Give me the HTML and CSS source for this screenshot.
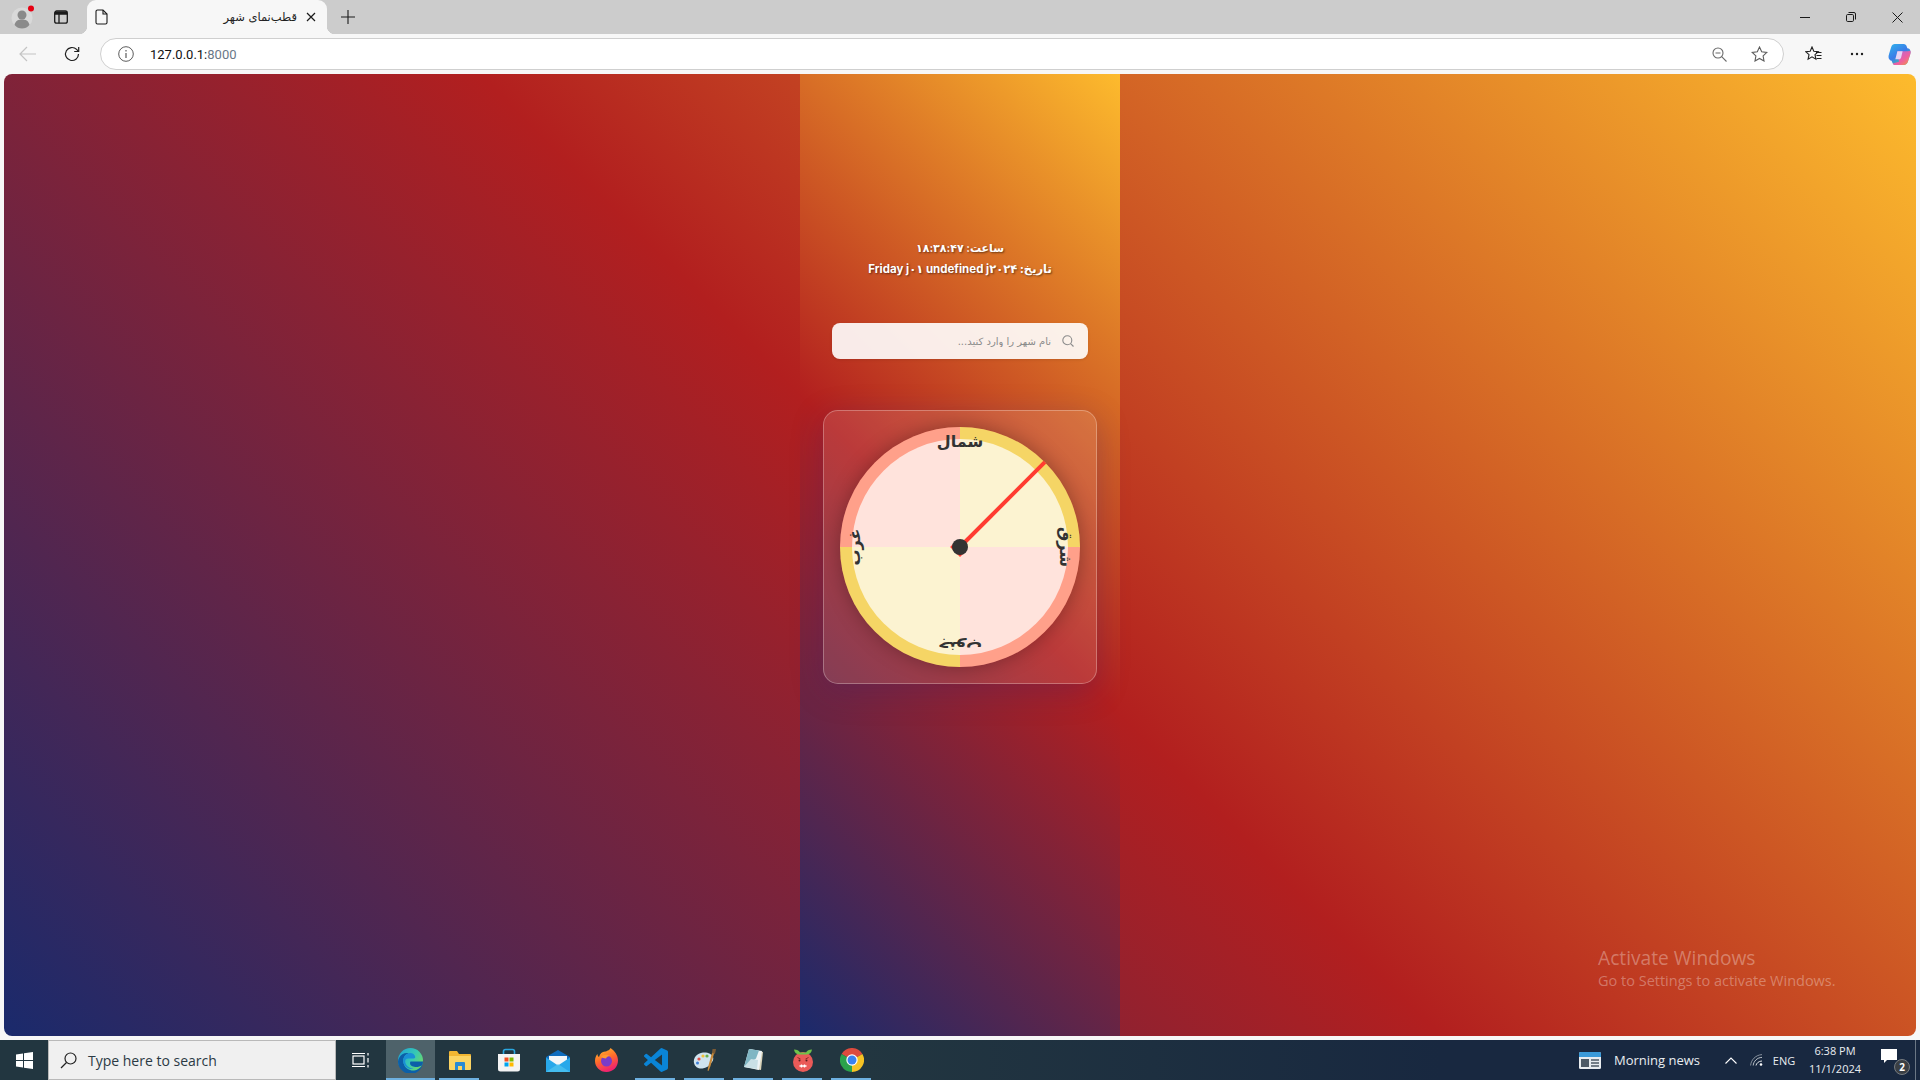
FILE: index.html
```html
<!DOCTYPE html>
<html lang="fa">
<head>
<meta charset="utf-8">
<title>قطب‌نمای شهر</title>
<link rel="stylesheet" href="styles.css">
</head>
<body>
<header class="tabstrip">
  <div class="strip-btn profile">
    <svg width="24" height="24" viewBox="0 0 24 24"><circle cx="11" cy="13" r="10.5" fill="#d9d9d9"/><circle cx="11" cy="10" r="4.5" fill="#8a8a8a"/><path d="M3.5 20c1-4.5 4-5.5 7.500-5.500s6.500 1 7.500 5.500c-2 2.500-4.500 3.500-7.500 3.500s-5.500-1-7.500-3.500z" fill="#8a8a8a"/><circle cx="20" cy="3.500" r="3" fill="#e60012"/></svg>
  </div>
  <div class="strip-btn vtabs">
    <svg width="16" height="16" viewBox="0 0 16 16" fill="none" stroke="#1a1a1a" stroke-width="1.300"><rect x="1.700" y="2" width="12.600" height="12.200" rx="2"/><path d="M1.700 5h12.600M6 5v9.200"/><path d="M2 2.500h12v2.500H2z" fill="#1a1a1a" stroke="none"/></svg>
  </div>
  <div class="tab">
    <svg class="tab-doc" width="14" height="16" viewBox="0 0 14 16" fill="none" stroke="#1a1a1a" stroke-width="1.100"><path d="M2.500 1h5.500l4 4v8.500a1.500 1.500 0 0 1-1.500 1.500h-8A1.500 1.500 0 0 1 1 13.500v-11A1.500 1.500 0 0 1 2.500 1z"/><path d="M8 1v4h4"/></svg>
    <span class="tab-title">قطب‌نمای شهر</span>
    <svg class="tab-close" width="10" height="10" viewBox="0 0 10 10" stroke="#1a1a1a" stroke-width="1.200"><path d="M1 1l8 8M9 1l-8 8"/></svg>
  </div>
  <div class="newtab">
    <svg width="14" height="14" viewBox="0 0 14 14" stroke="#1a1a1a" stroke-width="1.100"><path d="M7 0v14M0 7h14"/></svg>
  </div>
  <div class="win-controls">
    <div class="win-btn"><svg width="10" height="10" viewBox="0 0 10 10" stroke="#1a1a1a"><path d="M0 5.500h10"/></svg></div>
    <div class="win-btn"><svg width="10" height="10" viewBox="0 0 10 10" fill="none" stroke="#1a1a1a"><rect x=".5" y="2.500" width="7" height="7" rx="1.200"/><path d="M2.500 .5h5.500a1.500 1.500 0 0 1 1.500 1.500v5.500"/></svg></div>
    <div class="win-btn"><svg width="11" height="11" viewBox="0 0 11 11" stroke="#1a1a1a"><path d="M.5.5l10 10M10.500.5l-10 10"/></svg></div>
  </div>
</header>

<nav class="toolbar">
  <div class="tool back"><svg width="18" height="16" viewBox="0 0 18 16" fill="none" stroke="#c4c4c4" stroke-width="1.200"><path d="M17 8H1M8 1L1 8l7 7"/></svg></div>
  <div class="tool reload"><svg width="16" height="16" viewBox="0 0 16 16" fill="none" stroke="#1f1f1f" stroke-width="1.200"><path d="M14.500 8a6.500 6.500 0 1 1-1.900-4.600L14.500 5.300"/><path d="M14.700 1v4.500h-4.500"/></svg></div>
  <div class="omnibox">
    <svg class="info" width="16" height="16" viewBox="0 0 16 16" fill="none" stroke="#5c5c5c"><circle cx="8" cy="8" r="7.300"/><path d="M8 7v5M8 4v1.400" stroke-width="1.200"/></svg>
    <span class="url">127.0.0.1:<span class="port">8000</span></span>
    <svg class="omni-zoom" width="15" height="15" viewBox="0 0 15 15" fill="none" stroke="#6b6b6b" stroke-width="1.100"><circle cx="6" cy="6" r="5"/><path d="M9.700 9.700L14.500 14.500M3.500 6h5"/></svg>
    <svg class="omni-star" width="17" height="16" viewBox="0 0 17 16" fill="none" stroke="#5c5c5c" stroke-width="1.100"><path d="M8.500 1l2.200 4.700 5.100.7-3.700 3.500.9 5.100-4.500-2.500L4 15l.9-5.100L1.200 6.400l5.100-.7z"/></svg>
  </div>
  <div class="tool favs"><svg width="17" height="16" viewBox="0 0 17 16" fill="none" stroke="#1f1f1f" stroke-width="1.100"><path d="M7 1l1.800 4.200 4.500.5-3.300 3 .9 4.500L7 10.900 3.100 13.200l.9-4.500-3.300-3 4.500-.5z"/><path d="M11 6.500h5.500M11.500 9.500h5M11.500 12.500h5"/></svg></div>
  <div class="tool more"><svg width="14" height="4" viewBox="0 0 14 4" fill="#1f1f1f"><circle cx="2" cy="2" r="1.200"/><circle cx="7" cy="2" r="1.200"/><circle cx="12" cy="2" r="1.200"/></svg></div>
  <div class="tool copilot">
    <svg width="23" height="23" viewBox="0 0 22 22"><defs><linearGradient id="cpa" x1="0" y1="0" x2=".7" y2="1"><stop offset="0" stop-color="#2fb4ec"/><stop offset=".55" stop-color="#3a7be8"/><stop offset="1" stop-color="#4fd39a"/></linearGradient><linearGradient id="cpb" x1="0" y1="0" x2="1" y2="1"><stop offset="0" stop-color="#a86be0"/><stop offset=".6" stop-color="#ee5fa0"/><stop offset="1" stop-color="#f79a3e"/></linearGradient></defs><path d="M6.500 1H15c1.500 0 2.500 1 3 2.500l.5 1.500c1.500 0 3 1 3 3.500 0 1-.2 2-.5 3L19 18c-.6 2-2 3-4 3H7c-1.500 0-2.500-1-3-2.500L3.500 17C2 17 .5 15.500.5 13.500c0-1 .2-2 .5-3L3 4C3.600 2 5 1 6.500 1z" fill="url(#cpa)"/><path d="M9 8h10l2.500-.5c.3 1 .2 2-.1 3L19 18c-.6 2-2 3-4 3H7c-1 0-2-.5-2.500-1.500l6-1.500z" fill="url(#cpb)"/><path d="M9 8h5l-1.500 6c-.2.8-1 1.500-2 1.500H7z" fill="#e6d4f5"/></svg>
  </div>
</nav>

<main class="viewport">
  <div class="page">
    <section class="app">
      <div class="datetime">
        <p class="dt-line dt-time">ساعت: ۱۸:۳۸:۴۷</p>
        <p class="dt-line">تاریخ: Friday j۰۱ undefined j۲۰۲۴</p>
      </div>
      <div class="search">
        <svg class="search-icon" width="12" height="12" viewBox="0 0 12 12" fill="none" stroke="#8b8b8b" stroke-width="1.100"><circle cx="5.300" cy="5.300" r="4.500"/><path d="M8.600 8.600l2.900 2.900"/></svg>
        <input class="search-input" type="text" dir="rtl" placeholder="نام شهر را وارد کنید...">
      </div>
      <div class="compass-card">
        <div class="dial">
          <div class="dial-face"></div>
          <span class="dir dir-n">شمال</span>
          <span class="dir dir-e">شرق</span>
          <span class="dir dir-s">جنوب</span>
          <span class="dir dir-w">غرب</span>
          <div class="needle"><div class="needle-hub"></div><div class="needle-bar"></div></div>
          <div class="pivot"></div>
        </div>
      </div>
    </section>
    <div class="activate">
      <div class="activate-title">Activate Windows</div>
      <div class="activate-sub">Go to Settings to activate Windows.</div>
    </div>
  </div>
</main>

<footer class="taskbar">
  <div class="start"><svg width="17" height="17" viewBox="0 0 17 17" fill="#fff"><path d="M0 2.500l7-1v6.500H0zM8 1.300L17 0v8H8zM0 9h7v6.500l-7-1zM8 9h9v8l-9-1.300z"/></svg></div>
  <div class="tb-search">
    <svg width="17" height="17" viewBox="0 0 17 17" fill="none" stroke="#222" stroke-width="1.200"><circle cx="10.500" cy="6.500" r="5.500"/><path d="M6.500 10.500L1 16"/></svg>
    <span>Type here to search</span>
  </div>
  <div class="taskview"><svg width="18" height="16" viewBox="0 0 18 16" fill="none" stroke="#fff" stroke-width="1.200"><rect x="1" y="4" width="11" height="8"/><path d="M0 1.500h13M0 14.500h13M16 1v2.500M16 6v4.500M16 13v2.500"/></svg></div>
  <div class="app-icon active">
    <svg width="25" height="25" viewBox="0 0 24 24"><defs><linearGradient id="ega" x1="0" y1="0" x2="1" y2=".6"><stop offset="0" stop-color="#1fa2d8"/><stop offset=".6" stop-color="#36c8b5"/><stop offset="1" stop-color="#6cd86a"/></linearGradient></defs><circle cx="12" cy="12" r="12" fill="url(#ega)"/><path d="M1 9.500C3 5.500 7 4 10.500 5c-4 1-6.500 5-5 10 1.400 4.500 6 7 10 6.500 3-.4 6-2.200 7.500-5-2 1.500-5 2-7.500 1.500-3.500-.8-4.700-3-3.500-5H24c0 6-5 12-12 12C5.500 24.500 0 19.500 0 13c0-1.300.4-2.500 1-3.500z" fill="#0c5fa8"/><path d="M5.500 15c-1.500-5 1-9 5-10 3-.6 5.500 1 6 3.500.2 1-.5 1.500-1.500 1.500H10c-2.400 0-3.600 1.500-3 4 .8 3.400 4.500 6 8 5.800-3.800 1-8-1-9.500-4.800z" fill="#1a8fd6"/></svg>
  </div>
  <div class="app-icon running">
    <svg width="22" height="20" viewBox="0 0 22 20"><path d="M0 2a1 1 0 0 1 1-1h7l2 3h11a1 1 0 0 1 1 1v3H0z" fill="#f2b632"/><path d="M0 6h22v13a1 1 0 0 1-1 1H1a1 1 0 0 1-1-1z" fill="#fcd463"/><path d="M6 20v-7a1 1 0 0 1 1-1h8a1 1 0 0 1 1 1v7h-3v-4H9v4z" fill="#2a8ad4"/></svg>
  </div>
  <div class="app-icon">
    <svg width="24" height="24" viewBox="0 0 24 24"><path d="M6.500 6V3.500C6.500 2.200 7.500 1.500 8.500 1.500h7c1 0 2 .7 2 2V6" fill="none" stroke="#2aa7e0" stroke-width="1.600"/><path d="M1 6h22v15a2.500 2.500 0 0 1-2.500 2.500h-17A2.500 2.500 0 0 1 1 21z" fill="#f4f4f4"/><rect x="7.500" y="9.500" width="4" height="4" fill="#f25022"/><rect x="12.500" y="9.500" width="4" height="4" fill="#7fba00"/><rect x="7.500" y="14.500" width="4" height="4" fill="#00a4ef"/><rect x="12.500" y="14.500" width="4" height="4" fill="#ffb900"/></svg>
  </div>
  <div class="app-icon">
    <svg width="24" height="24" viewBox="0 0 24 24"><path d="M0 9l12-7 12 7v14H0z" fill="#0f6cbd"/><path d="M3 6h18v8l-9 5-9-5z" fill="#f4f6f8" transform="translate(0 2)"/><path d="M0 9.500l12 8 12-8V24H0z" fill="#28a8ea"/><path d="M0 24l12-8 12 8z" fill="#50c4f0" opacity=".7"/></svg>
  </div>
  <div class="app-icon">
    <svg width="23" height="24" viewBox="0 0 23 24"><defs><linearGradient id="ffa" x1="0" y1="0" x2=".4" y2="1"><stop offset="0" stop-color="#ffc52f"/><stop offset=".55" stop-color="#ff6a2b"/><stop offset="1" stop-color="#f0246e"/></linearGradient></defs><path d="M15.500 0c4.500 3 7.500 7.500 7.500 12.500C23 19 18 24 11.500 24S0 19 0 13c0-3 1-5.500 2.500-7 0 1.500.5 2.500 1.500 3C5 5.500 7.500 3 11 3.500 12.500 2.500 15 2 15.500 0z" fill="url(#ffa)"/><circle cx="11.500" cy="13" r="5.500" fill="#7a3bc8"/><path d="M6 9c2-2.500 6-3 9-1-2 0-3.500 1-4 2.500C9 10 7 10 6 9z" fill="#ff9a30"/></svg>
  </div>
  <div class="app-icon running">
    <svg width="24" height="24" viewBox="0 0 24 24"><path d="M23.150 2.587L18.210.21a1.494 1.494 0 0 0-1.705.29l-9.460 8.630-4.120-3.128a.999.999 0 0 0-1.276.057L.327 7.261A1 1 0 0 0 .326 8.740L3.899 12 .326 15.260a1 1 0 0 0 .001 1.479L1.650 17.940a.999.999 0 0 0 1.276.057l4.120-3.128 9.460 8.630a1.492 1.492 0 0 0 1.704.29l4.942-2.377A1.500 1.500 0 0 0 24 20.060V3.939a1.500 1.500 0 0 0-.85-1.352zm-5.146 14.861L10.826 12l7.178-5.448v10.896z" fill="#0a84d6"/></svg>
  </div>
  <div class="app-icon running">
    <svg width="24" height="24" viewBox="0 0 24 24"><path d="M1 15c-1-5 3-10 9-10.500 5-.4 9 1.500 10 4.500 1 3-1 5-2.500 7s-4 4-8 4.500S2 19 1 15z" fill="#cfe3ee"/><circle cx="6" cy="11" r="1.600" fill="#e2524a"/><circle cx="10" cy="8" r="1.600" fill="#f2c23a"/><circle cx="14" cy="8" r="1.600" fill="#6ab04c"/><circle cx="4.500" cy="15" r="1.500" fill="#3f7fd6"/><path d="M22 1l-1.500 1.500-2 4-3 11-1 5 1 .4 2-5 3-10.500z" fill="#c78a3b"/><path d="M19.500 1h3.500l-1 5-3-1z" fill="#7a5a34"/></svg>
  </div>
  <div class="app-icon running">
    <svg width="24" height="24" viewBox="0 0 24 24"><path d="M7 1l14 3-2 18-6-1z" fill="#d9d2b8"/><path d="M7 1l13 2-3 19-15-3z" fill="#eef4f6"/><path d="M7 1l10 1.500-3 8L2 19z" fill="#7fb6c4"/><path d="M2 19l7-8 7 1-1 9z" fill="#c9e0e6"/></svg>
  </div>
  <div class="app-icon running">
    <svg width="24" height="24" viewBox="0 0 24 24"><circle cx="12" cy="14" r="10" fill="#ea5a58"/><path d="M3 1.500c3 0 5 1 6 3h6c1-2 3-3 6-3-.5 3-2 4.500-5 5H8c-3-.5-4.500-2-5-5z" fill="#6fc24a"/><path d="M6.500 9.500l3 1.500M17.500 9.500l-3 1.500" stroke="#8a2a2a" stroke-width="1"/><circle cx="8.500" cy="12.500" r="1" fill="#5a1f1f"/><circle cx="15.500" cy="12.500" r="1" fill="#5a1f1f"/><path d="M8.500 18h7M10.500 16.500v3M13.500 16.500v3" stroke="#fff" stroke-width="1.300"/></svg>
  </div>
  <div class="app-icon running">
    <svg width="24" height="24" viewBox="0 0 24 24"><path d="M12 12L1.600 6A12 12 0 0 1 22.400 6z" fill="#dd4b3e"/><path d="M12 12L22.400 6A12 12 0 0 1 12 24z" fill="#f6c324"/><path d="M12 12L12 24A12 12 0 0 1 1.600 6z" fill="#2ba24c"/><circle cx="12" cy="12" r="5.700" fill="#fff"/><circle cx="12" cy="12" r="4.500" fill="#3b82ee"/></svg>
  </div>
  <div class="tray">
    <div class="news">
      <svg width="22" height="17" viewBox="0 0 22 17"><rect width="22" height="17" rx="1.500" fill="#e8ecef"/><path d="M0 1.500A1.500 1.500 0 0 1 1.500 0h19A1.500 1.500 0 0 1 22 1.500V5H0z" fill="#3a9ad9"/><rect x="2" y="7" width="8" height="8" fill="#4d5a66"/><path d="M12 8h8M12 11h8M12 14h8" stroke="#4d5a66" stroke-width="1.600"/></svg>
      <span>Morning news</span>
    </div>
    <svg class="chev" width="12" height="7" viewBox="0 0 12 7" fill="none" stroke="#fff" stroke-width="1.100"><path d="M.5 6.500L6 1l5.500 5.500"/></svg>
    <svg class="wifi" width="13" height="12" viewBox="0 0 13 12" fill="none" stroke="#dfe3e6"><path d="M.6 11.500C1 6 5.500 1 12 .6" opacity=".55"/><path d="M3.200 11.500C3.500 7.500 7 3.500 12 3.400" opacity=".8"/><path d="M6 11.500C6.300 9.500 8.500 7 12 7"/><circle cx="11" cy="10.500" r="1.300" fill="#fff" stroke="none"/></svg>
    <span class="lang">ENG</span>
    <div class="clock"><span>6:38 PM</span><span>11/1/2024</span></div>
    <div class="notif">
      <svg width="16" height="15" viewBox="0 0 16 15"><path d="M0 0h16v11H6l-3 3v-3H0z" fill="#fff"/></svg>
      <span class="badge">2</span>
    </div>
    <div class="show-desktop"></div>
  </div>
</footer>
</body>
</html>
```

FILE: styles.css
```css
* { box-sizing: border-box; }
html, body { margin: 0; height: 100%; }
body {
  width: 1920px;
  height: 1080px;
  overflow: hidden;
  display: flex;
  flex-direction: column;
  background: #f7f7f7;
  font-family: "Open Sans", "Noto Sans", "DejaVu Sans", sans-serif;
}
svg { display: block; flex: none; }

/* tab strip */
.tabstrip { height: 34px; background: #cccccc; display: flex; align-items: stretch; flex: none; }
.strip-btn { display: flex; align-items: center; justify-content: center; }
.profile { width: 46px; }
.vtabs { width: 30px; margin-right: 11px; }
.tab {
  position: relative;
  width: 240px;
  background: #f7f7f7;
  border-radius: 9px 9px 0 0;
  display: flex;
  align-items: center;
  padding: 0 11px 0 8px;
}
.tab::before, .tab::after {
  content: "";
  position: absolute;
  bottom: 0;
  width: 8px;
  height: 8px;
}
.tab::before { left: -8px; background: radial-gradient(circle at 0 0, transparent 8px, #f7f7f7 8.5px); }
.tab::after { right: -8px; background: radial-gradient(circle at 100% 0, transparent 8px, #f7f7f7 8.5px); }
.tab-title {
  flex: 1;
  direction: rtl;
  font-family: "DejaVu Sans", sans-serif;
  font-size: 11.500px;
  color: #1f1f1f;
  white-space: nowrap;
  padding-right: 9px;
}
.newtab { width: 42px; display: flex; align-items: center; justify-content: center; }
.win-controls { margin-left: auto; display: flex; }
.win-btn { width: 46px; display: flex; align-items: center; justify-content: center; }

/* toolbar */
.toolbar { height: 40px; display: flex; align-items: center; flex: none; background: #f7f7f7; }
.tool { display: flex; align-items: center; justify-content: center; }
.back { width: 55px; }
.reload { width: 34px; margin-right: 11px; }
.omnibox {
  width: 1684px;
  height: 32px;
  background: #fff;
  border: 1px solid #cfcfcf;
  border-radius: 16px;
  display: flex;
  align-items: center;
  padding: 0 15px 0 17px;
}
.url { margin-left: 16px; font-family: "Roboto", sans-serif; font-size: 13px; color: #111; }
.port { color: #6a7888; }
.omni-zoom { margin-left: auto; margin-right: 24px; }
.favs { width: 44px; margin-left: 7px; }
.more { width: 44px; }
.copilot { width: 40px; }

/* page */
.viewport { flex: 1; padding: 0 4px 4px; min-height: 0; display: flex; }
.page {
  position: relative;
  flex: 1;
  border-radius: 8px;
  overflow: hidden;
  background: linear-gradient(45deg, #1a2a6c, #b21f1f, #fdbb2d);
  display: flex;
  justify-content: center;
}
.app {
  width: 320px;
  background: linear-gradient(45deg, #1a2a6c, #b21f1f, #fdbb2d);
  padding: 164px 32px 0;
  display: flex;
  flex-direction: column;
  align-items: center;
  font-family: "Inter", "DejaVu Sans", sans-serif;
}
.datetime { color: #fff; text-align: center; direction: rtl; font-weight: 700; font-size: 11.500px; line-height: 21px; text-shadow: 1px 1px 2px rgba(0,0,0,.5); }
.dt-line { margin: 0; height: 21px; white-space: nowrap; }
.dt-time { font-size: 11px; }
.search {
  margin-top: 43px;
  width: 256px;
  height: 36px;
  background: rgba(255,255,255,.9);
  border-radius: 8px;
  display: flex;
  flex-direction: row-reverse;
  align-items: center;
  padding: 0 14px 0 10px;
  box-shadow: 0 1px 3px rgba(0,0,0,.1);
}
.search-input {
  flex: 1;
  min-width: 0;
  border: 0;
  outline: 0;
  background: transparent;
  font-family: "DejaVu Sans", sans-serif;
  font-size: 10px;
  padding: 0 11px 0 0;
}
.search-input::placeholder { color: #8a8a8a; opacity: 1; }
.compass-card {
  margin-top: 51px;
  width: 274px;
  height: 274px;
  flex: none;
  border-radius: 15px;
  border: 1px solid rgba(255,255,255,.28);
  background: rgba(255,255,255,.12);
  box-shadow: 0 8px 32px rgba(31,38,135,.25);
  display: flex;
  align-items: center;
  justify-content: center;
}
.dial {
  position: relative;
  width: 240px;
  height: 240px;
  border-radius: 50%;
  background: conic-gradient(#f5d565 0 25%, #ffa08a 25% 50%, #f5d565 50% 75%, #ffa08a 75% 100%);
  box-shadow: 0 0 20px rgba(0,0,0,.3);
  font-family: "DejaVu Sans", sans-serif;
  font-size: 16px;
  font-weight: 700;
  color: #333;
}
.dial-face { position: absolute; inset: 12px; border-radius: 50%; background: rgba(255,255,255,.7); }
.dir { position: absolute; left: 50%; top: 50%; line-height: 1; white-space: nowrap; }
.dir-n { transform: translate(-50%, -50%) translateY(-105px); }
.dir-e { transform: translate(-50%, -50%) rotate(90deg) translateY(-105px); }
.dir-s { transform: translate(-50%, -50%) rotate(180deg) translateY(-100px); }
.dir-w { transform: translate(-50%, -50%) rotate(-90deg) translateY(-105px); }
.needle { position: absolute; left: 50%; top: 50%; width: 0; height: 0; transform: rotate(45deg); }
.needle-bar { position: absolute; left: -2px; bottom: 0; width: 4px; height: 120px; background: #ff3b30; }
.needle-hub { position: absolute; left: -7px; top: 0; width: 14px; height: 7px; background: #ff3b30; }
.pivot { position: absolute; left: 112px; top: 112px; width: 16px; height: 16px; border-radius: 50%; background: #333; }
.activate { position: absolute; left: 1594px; top: 871px; color: rgba(255,255,255,.33); font-family: "Open Sans", sans-serif; white-space: nowrap; }
.activate-title { font-size: 19.200px; line-height: 26px; }
.activate-sub { font-size: 14.500px; line-height: 19px; }

/* taskbar */
.taskbar {
  height: 40px;
  flex: none;
  display: flex;
  align-items: stretch;
  background: linear-gradient(90deg, #223640 0%, #223640 45%, #182840 75%, #182840 100%);
  color: #fff;
}
.start { width: 48px; display: flex; align-items: center; justify-content: center; }
.tb-search {
  width: 288px;
  background: #f0f0f0;
  border: 1px solid #b9b9b9;
  display: flex;
  align-items: center;
  padding-left: 11px;
  gap: 11px;
  color: #2b3a44;
  font-size: 14px;
}
.taskview { width: 50px; display: flex; align-items: center; justify-content: center; }
.app-icon { width: 49px; display: flex; align-items: center; justify-content: center; position: relative; }
.app-icon.active { background: #4e626a; }
.app-icon.active::after, .app-icon.running::after {
  content: "";
  position: absolute;
  left: 4px;
  right: 5px;
  bottom: 0;
  height: 2px;
  background: #6eb1e1;
}
.app-icon.active::after { left: 0; right: 0; }
.tray { margin-left: auto; display: flex; align-items: center; color: #e9edf0; font-size: 11px; }
.news { display: flex; align-items: center; gap: 13px; font-size: 13px; }
.chev { margin-left: 25px; }
.wifi { margin-left: 13px; }
.lang { margin-left: 8px; width: 26px; text-align: center; }
.clock { margin-left: 0; width: 76px; display: flex; flex-direction: column; align-items: center; line-height: 18px; }
.notif { margin-left: 3px; width: 34px; height: 30px; position: relative; padding: 4px 0 0 5px; }
.badge {
  position: absolute;
  right: 0;
  bottom: 0;
  width: 16px;
  height: 16px;
  border-radius: 50%;
  background: #3a3f44;
  border: 1px solid #767b80;
  font-size: 10px;
  font-weight: 700;
  line-height: 14px;
  text-align: center;
  color: #fff;
}
.show-desktop { width: 5px; margin-left: 5px; height: 40px; border-left: 1px solid #6a7785; }
```
